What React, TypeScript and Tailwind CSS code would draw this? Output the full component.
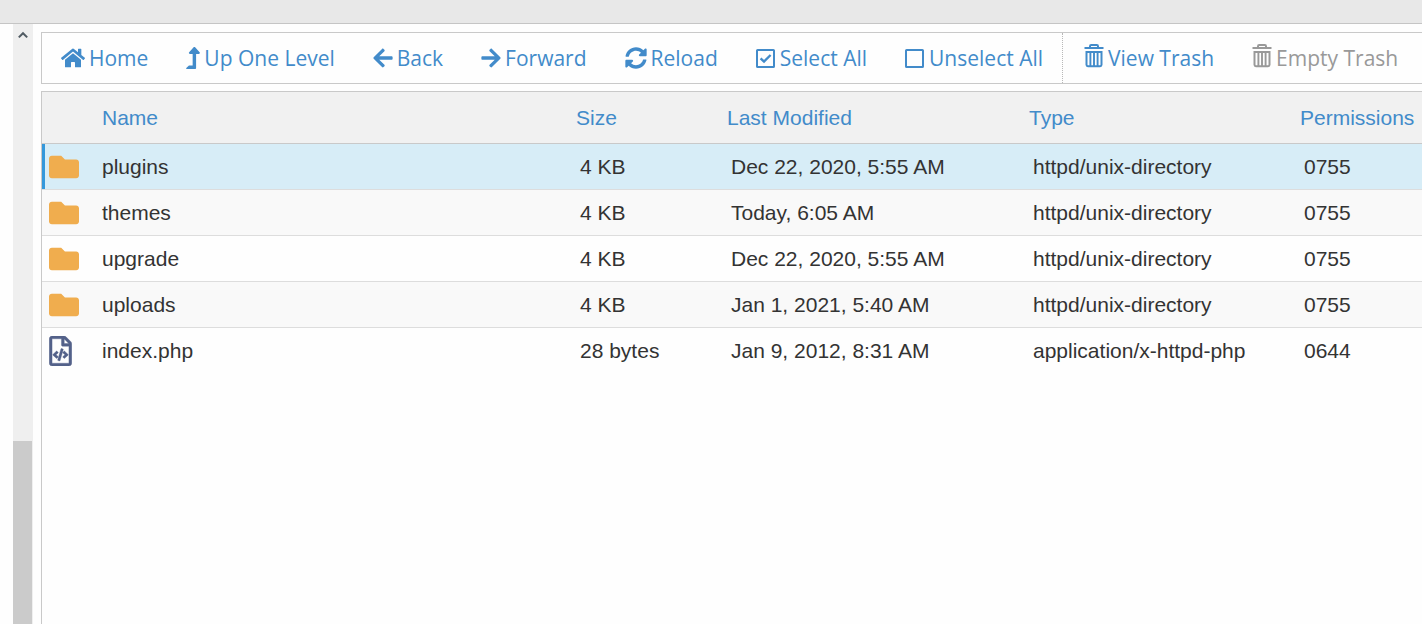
import type { ReactNode } from "react";
import clsx from "clsx";
import { FaArrowLeft, FaArrowRight, FaFolder, FaHome, FaLevelUpAlt, FaRegFileCode, FaSyncAlt } from "react-icons/fa";

type FileEntry = {
  name: string;
  size: string;
  modified: string;
  type: string;
  permissions: string;
  folder?: boolean;
};

const COLUMNS = ["Size", "Last Modified", "Type", "Permissions"];

const FILES: FileEntry[] = [
  { name: "plugins", size: "4 KB", modified: "Dec 22, 2020, 5:55 AM", type: "httpd/unix-directory", permissions: "0755", folder: true },
  { name: "themes", size: "4 KB", modified: "Today, 6:05 AM", type: "httpd/unix-directory", permissions: "0755", folder: true },
  { name: "upgrade", size: "4 KB", modified: "Dec 22, 2020, 5:55 AM", type: "httpd/unix-directory", permissions: "0755", folder: true },
  { name: "uploads", size: "4 KB", modified: "Jan 1, 2021, 5:40 AM", type: "httpd/unix-directory", permissions: "0755", folder: true },
  { name: "index.php", size: "28 bytes", modified: "Jan 9, 2012, 8:31 AM", type: "application/x-httpd-php", permissions: "0644" },
];

function CheckboxIcon({ checked }: { checked?: boolean }) {
  return (
    <svg viewBox="0 0 20 20" className="h-5 w-5" fill="none" stroke="currentColor" strokeWidth="2">
      <rect x="1" y="2" width="17" height="17" rx="0.6" />
      {checked && <path d="M4.6 10.3 8 13.6 14.6 7" strokeWidth="2.4" />}
    </svg>
  );
}

function TrashIcon() {
  return (
    <svg viewBox="0 0 20 28" className="h-7 w-5" fill="none" stroke="currentColor">
      <path d="M0.5 4h19" strokeWidth="2" />
      <path d="M6 4V2.2Q6 1 7.2 1h5.6Q14 1 14 2.2V4" strokeWidth="2" />
      <path d="M2.5 8h15V20.8q0 1.4-1.4 1.4H3.9q-1.4 0-1.4-1.4z" strokeWidth="2" />
      <path d="M6.4 8v14M10 8v14M13.6 8v14" strokeWidth="1.9" />
    </svg>
  );
}

function ToolbarButton({ icon, label, disabled }: { icon: ReactNode; label: string; disabled?: boolean }) {
  return (
    <button
      type="button"
      disabled={disabled}
      className={clsx(
        "flex h-full shrink-0 items-center gap-1 px-[19px] whitespace-nowrap",
        disabled ? "text-[#999999]" : "cursor-pointer text-[#428bca]"
      )}
    >
      {icon}
      <span>{label}</span>
    </button>
  );
}

function Toolbar() {
  return (
    <div className="flex h-[52px] items-center overflow-hidden border border-r-0 border-[#c9c9c9] font-['Open_Sans',sans-serif] text-[21px] leading-7">
      <ToolbarButton icon={<FaHome className="h-6 w-6" />} label="Home" />
      <ToolbarButton icon={<FaLevelUpAlt className="h-[22px] w-[14px]" />} label="Up One Level" />
      <ToolbarButton icon={<FaArrowLeft className="h-[22px] w-5" />} label="Back" />
      <ToolbarButton icon={<FaArrowRight className="h-[22px] w-5" />} label="Forward" />
      <ToolbarButton icon={<FaSyncAlt className="h-[22px] w-[22px]" />} label="Reload" />
      <ToolbarButton icon={<CheckboxIcon checked />} label="Select All" />
      <ToolbarButton icon={<CheckboxIcon />} label="Unselect All" />
      <div className="flex h-full shrink-0 border-l border-dotted border-[#b8b8b8] pl-0.5">
        <ToolbarButton icon={<TrashIcon />} label="View Trash" />
        <ToolbarButton icon={<TrashIcon />} label="Empty Trash" disabled />
      </div>
    </div>
  );
}

function FileTable() {
  return (
    <table className="w-full table-fixed border-separate border-spacing-0 text-left text-[21px] leading-7 whitespace-nowrap">
      <colgroup>
        <col className="w-[52px]" />
        <col />
        <col className="w-[151px]" />
        <col className="w-[302px]" />
        <col className="w-[271px]" />
        <col className="w-[126px]" />
      </colgroup>
      <thead>
        <tr className="h-[52px] bg-[#f1f1f1] text-[#428bca]">
          <th className="border-b border-[#c9c9c9]" aria-label="Icon" />
          <th className="border-b border-[#c9c9c9] pl-2 font-normal">
            <button type="button" className="cursor-pointer">Name</button>
          </th>
          {COLUMNS.map((column) => (
            <th key={column} className="border-b border-[#c9c9c9] pl-1 font-normal">
              <button type="button" className="cursor-pointer">{column}</button>
            </th>
          ))}
        </tr>
      </thead>
      <tbody className="text-[#333333]">
        {FILES.map((file, index) => {
          const selected = index === 0;
          const line = index < FILES.length - 1 && "border-b border-[#dddddd]";
          return (
            <tr
              key={file.name}
              aria-selected={selected}
              className={clsx("h-[46px]", selected ? "bg-[#d7edf7]" : index % 2 === 1 && "bg-[#f9f9f9]")}
            >
              <td className={clsx("pl-[7px]", line, selected && "shadow-[inset_3px_0_#3498db]")}>
                {file.folder ? (
                  <FaFolder className="h-[30px] w-[30px] text-[#f0ad4e]" />
                ) : (
                  <FaRegFileCode className="h-[30px] w-[23px] text-[#536189]" stroke="currentColor" strokeWidth="6" />
                )}
              </td>
              <td className={clsx("pl-2", line)}>{file.name}</td>
              <td className={clsx("pl-2", line)}>{file.size}</td>
              <td className={clsx("pl-2", line)}>{file.modified}</td>
              <td className={clsx("pl-2", line)}>{file.type}</td>
              <td className={clsx("pl-2", line)}>{file.permissions}</td>
            </tr>
          );
        })}
      </tbody>
    </table>
  );
}

export default function App() {
  return (
    <div className="flex h-screen flex-col overflow-hidden bg-[#fefefe] font-['Liberation_Sans',Arial,sans-serif]">
      <header className="h-6 shrink-0 border-b border-[#c5c5c5] bg-[#e8e8e8]" />
      <div className="flex min-h-0 flex-1">
        <div className="ml-[13px] flex w-5 shrink-0 flex-col bg-[#efefef]">
          <button type="button" aria-label="Scroll up" className="flex h-[22px] w-[19px] items-center justify-center text-[#505b63]">
            <svg viewBox="0 0 10 8" className="h-2 w-[10px]" fill="none" stroke="currentColor" strokeWidth="2">
              <path d="M0.8 6.4 5 2.2l4.2 4.2" />
            </svg>
          </button>
          <div className="flex-1" />
          <div className="h-[30.5%] w-[19px] bg-[#cbcbcb]" />
        </div>
        <main className="ml-2 flex min-w-0 flex-1 flex-col gap-[7px] pt-2">
          <Toolbar />
          <div className="flex-1 overflow-hidden border-t border-l border-[#c9c9c9]">
            <FileTable />
          </div>
        </main>
      </div>
    </div>
  );
}
